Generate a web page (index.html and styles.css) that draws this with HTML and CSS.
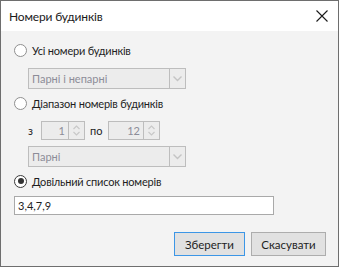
FILE: index.html
```html
<!DOCTYPE html>
<html lang="uk">
<head>
<meta charset="utf-8">
<link rel="stylesheet" href="styles.css">
</head>
<body>
<div class="window">
  <div class="titlebar">
    <span class="title">Номери будинків</span>
    <svg class="close" width="12" height="12" viewBox="0 0 12 12"><path d="M0.5 0.5 L11.5 11.5 M11.5 0.5 L0.5 11.5" stroke="#1a1a1a" stroke-width="1.1" fill="none"/></svg>
  </div>
  <div class="content">
    <div class="radio-row r1">
      <span class="radio"></span>
      <span class="label">Усі номери будинків</span>
    </div>
    <div class="select s1">
      <span class="select-text">Парні і непарні</span>
      <span class="select-btn"><svg width="9" height="6" viewBox="0 0 9 6"><path d="M0.5 0.5 L4.5 4.5 L8.5 0.5" stroke="#c4c4c4" stroke-width="1.4" fill="none"/></svg></span>
    </div>
    <div class="radio-row r2">
      <span class="radio"></span>
      <span class="label">Діапазон номерів будинків</span>
    </div>
    <div class="range-row">
      <span class="range-label z">з</span>
      <div class="spin">
        <span class="spin-val">1</span>
        <span class="spin-btns">
          <svg width="7" height="5" viewBox="0 0 7 5"><path d="M0.5 4 L3.5 1 L6.5 4" stroke="#c8c8c8" stroke-width="1.2" fill="none"/></svg>
          <svg width="7" height="5" viewBox="0 0 7 5"><path d="M0.5 1 L3.5 4 L6.5 1" stroke="#c8c8c8" stroke-width="1.2" fill="none"/></svg>
        </span>
      </div>
      <span class="range-label po">по</span>
      <div class="spin wide">
        <span class="spin-val">12</span>
        <span class="spin-btns">
          <svg width="7" height="5" viewBox="0 0 7 5"><path d="M0.5 4 L3.5 1 L6.5 4" stroke="#c8c8c8" stroke-width="1.2" fill="none"/></svg>
          <svg width="7" height="5" viewBox="0 0 7 5"><path d="M0.5 1 L3.5 4 L6.5 1" stroke="#c8c8c8" stroke-width="1.2" fill="none"/></svg>
        </span>
      </div>
    </div>
    <div class="select s2">
      <span class="select-text">Парні</span>
      <span class="select-btn"><svg width="9" height="6" viewBox="0 0 9 6"><path d="M0.5 0.5 L4.5 4.5 L8.5 0.5" stroke="#c4c4c4" stroke-width="1.4" fill="none"/></svg></span>
    </div>
    <div class="radio-row r3">
      <span class="radio checked"></span>
      <span class="label">Довільний список номерів</span>
    </div>
    <div class="input">3,4,7,9</div>
    <div class="buttons">
      <button class="btn primary">Зберегти</button>
      <button class="btn">Скасувати</button>
    </div>
  </div>
</div>
</body>
</html>
```
FILE: styles.css
```css
* { box-sizing: border-box; }
html, body { margin: 0; padding: 0; }
body {
  font-family: Lato, "Noto Sans", sans-serif;
  font-size: 11px;
  color: #1e1e1e;
  background: #ffffff;
}
.window {
  width: 339px;
  height: 267px;
  border: 1px solid #6e6e6e;
  display: flex;
  flex-direction: column;
  background: #f3f3f3;
}
.titlebar {
  height: 30px;
  background: #ffffff;
  display: flex;
  align-items: center;
  justify-content: space-between;
  padding: 0 10px 0 8px;
  flex-shrink: 0;
}
.title {
  font-size: 12px;
  letter-spacing: -0.15px;
  color: #1a1a1a;
}
.close { display: block; }
.content {
  flex: 1;
  display: flex;
  flex-direction: column;
  padding: 11px 0 0 13px;
}
.radio-row {
  height: 16px;
  display: flex;
  align-items: center;
  gap: 5px;
}
.radio {
  width: 13px;
  height: 13px;
  border: 1px solid #8f8f8f;
  border-radius: 50%;
  background: #ffffff;
  position: relative;
  flex-shrink: 0;
}
.radio.checked { border-color: #3a3a3a; }
.radio.checked::after {
  content: "";
  position: absolute;
  left: 2.5px;
  top: 2.5px;
  width: 6px;
  height: 6px;
  border-radius: 50%;
  background: #333333;
}
.label { color: #1e1e1e; letter-spacing: -0.2px; }
.select {
  width: 158px;
  height: 21px;
  margin-left: 14px;
  border: 1px solid #bdbdbd;
  background: #ececec;
  display: flex;
  align-items: center;
}
.select-text {
  flex: 1;
  padding-left: 3px;
  color: #8c8c98;
}
.select-btn {
  width: 16px;
  height: 100%;
  border-left: 1px solid #bdbdbd;
  display: flex;
  align-items: center;
  justify-content: center;
}
.select-btn svg { display: block; }
.s1 { margin-top: 10px; }
.r2 { margin-top: 6px; }
.range-row {
  margin-top: 10px;
  height: 19px;
  display: flex;
  align-items: center;
  padding-left: 14px;
}
.range-label { color: #1e1e1e; }
.z { width: 13px; }
.po { width: 18px; margin-left: 5px; }
.spin {
  width: 44px;
  height: 19px;
  border: 1px solid #bdbdbd;
  background: #ececec;
  display: flex;
}
.spin.wide { width: 52px; }
.spin-val {
  flex: 1;
  text-align: right;
  padding-right: 3px;
  line-height: 17px;
  color: #8c8c98;
}
.spin-btns {
  width: 16px;
  border-left: 1px solid #bdbdbd;
  display: flex;
  flex-direction: column;
  align-items: center;
  justify-content: center;
  gap: 1px;
}
.spin-btns svg { display: block; }
.s2 { margin-top: 6px; }
.r3 { margin-top: 6px; }
.input {
  margin-top: 7px;
  width: 260px;
  height: 19px;
  border: 1px solid #a9a9a9;
  background: #ffffff;
  padding-left: 3px;
  line-height: 17px;
  color: #1e1e1e;
}
.buttons {
  margin-top: 17px;
  display: flex;
  justify-content: flex-end;
  gap: 6px;
  padding-right: 12px;
}
.btn {
  font-family: inherit;
  font-size: 11.5px;
  height: 24px;
  border: 1px solid #adadad;
  background: #e1e1e1;
  color: #1e1e1e;
  padding: 0;
  margin: 0;
  width: 75px;
}
.btn.primary {
  width: 71px;
  border-color: #3c96e6;
}
```
